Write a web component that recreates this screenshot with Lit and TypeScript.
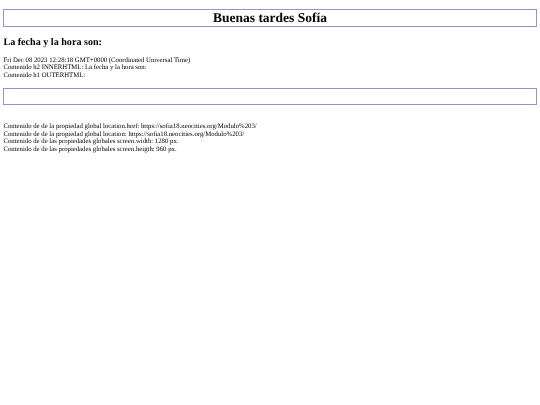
import { LitElement, html, css } from "lit";
import { customElement } from "lit/decorators.js";

@customElement("app-root")
export class AppRoot extends LitElement {
  static styles = css`
    :host { display: block; font-family: "Liberation Serif", serif; font-size: 6.75px; line-height: 7.5px; color: #000; padding: 9px 3px 0; background: #fff; min-height: 405px; box-sizing: border-box; text-rendering: geometricPrecision; }
    .box { border: 1px solid #9a90d0; box-sizing: border-box; height: 17.5px; }
    h1 { margin: 0; font-size: 13.5px; line-height: 15.5px; text-align: center; font-weight: bold; }
    h2 { margin: 10px 0 8px; padding-left: 0.4px; font-size: 10.125px; line-height: 12px; font-weight: bold; }
    .empty { margin-top: 8.5px; }
    .lines { margin-top: 18px; }
    p { margin: 0; padding-left: 0.4px; }
    .soft { filter: blur(0.3px); }
  `;
  render() {
    return html`
      <div class="soft">
        <div class="box"><h1>Buenas tardes Sofía</h1></div>
        <h2>La fecha y la hora son:</h2>
        <p>Fri Dec 08 2023 12:28:18 GMT+0000 (Coordinated Universal Time)</p>
        <p>Contenido h2 INNERHTML: La fecha y la hora son:</p>
        <p>Contenido h1 OUTERHTML:</p>
        <div class="box empty"></div>
        <div class="lines">
          <p>Contenido de de la propiedad global location.href: https://sofia18.neocities.org/Modulo%203/</p>
          <p>Contenido de de la propiedad global location: https://sofia18.neocities.org/Modulo%203/</p>
          <p>Contenido de de las propiedades globales screen.width: 1280 px.</p>
          <p>Contenido de de las propiedades globales screen.heigth: 960 px.</p>
        </div>
      </div>
    `;
  }
}
